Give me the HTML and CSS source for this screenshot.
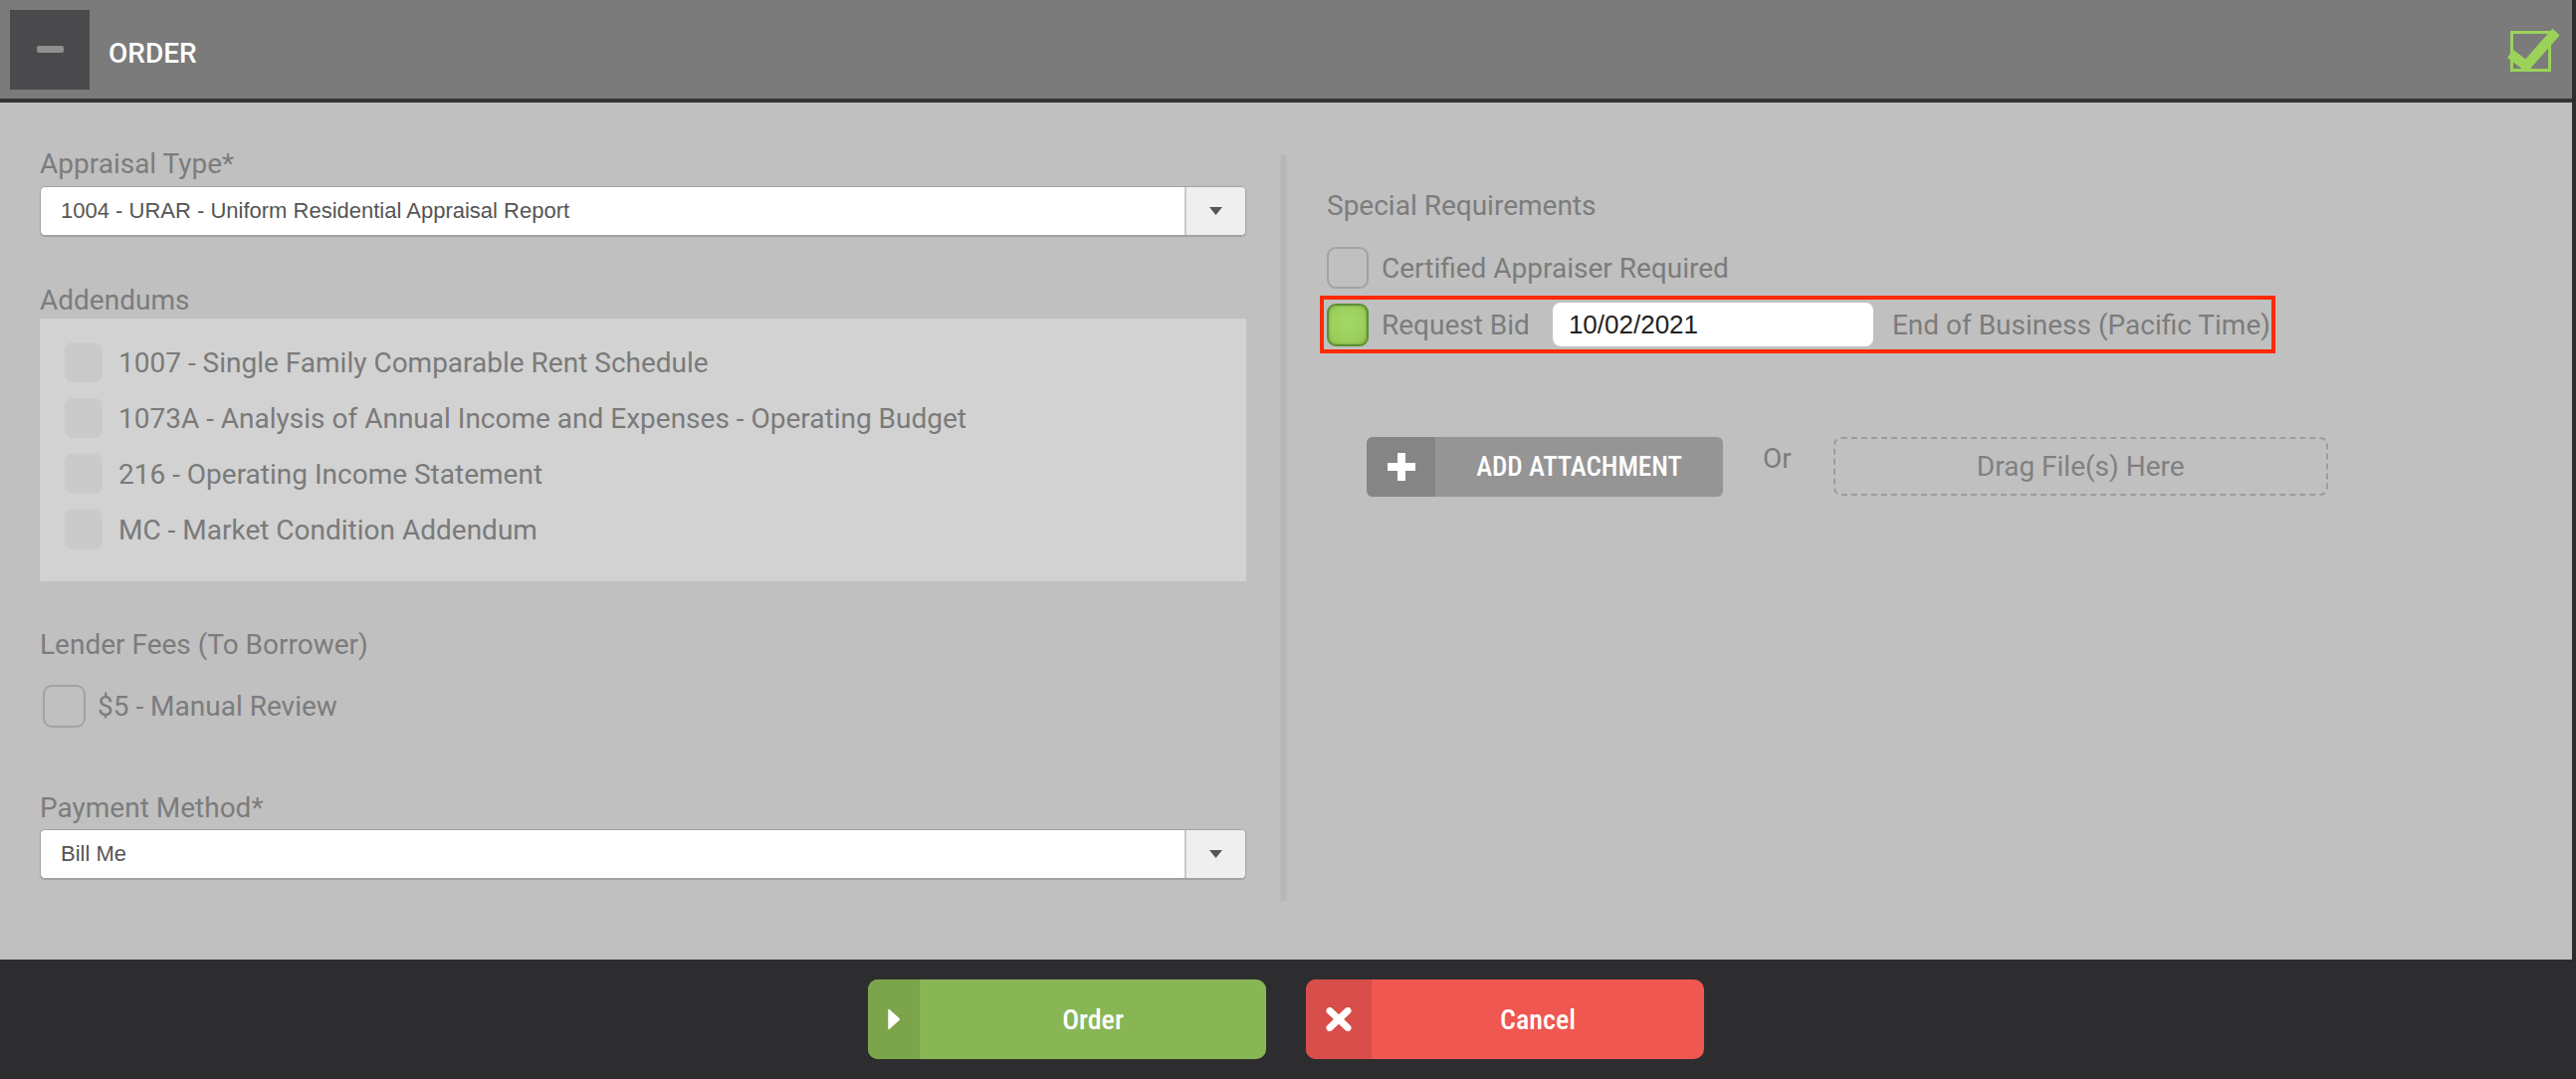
FILE: index.html
```html
<!DOCTYPE html>
<html lang="en">
<head>
<meta charset="utf-8">
<title>Order</title>
<link rel="stylesheet" href="styles.css">
</head>
<body>
<div class="page">
  <header class="topbar">
    <div class="collapse"><span class="minus"></span></div>
    <div class="title">ORDER</div>
    <svg class="done" width="52" height="44" viewBox="0 0 52 44" aria-hidden="true">
      <rect x="4.5" y="4.5" width="38" height="38" fill="none" stroke="#9bd35a" stroke-width="3"/>
      <path d="M3 26 L19 38 L49 4" fill="none" stroke="#9bd35a" stroke-width="10"/>
    </svg>
  </header>

  <main class="content">
    <section class="col-left">
      <div class="field">
        <div class="label">Appraisal Type*</div>
        <div class="select">
          <span class="select-value">1004 - URAR - Uniform Residential Appraisal Report</span>
          <span class="select-arrow"><svg width="13" height="8" viewBox="0 0 13 8"><path d="M0 0 H13 L6.5 8 Z" fill="#555"/></svg></span>
        </div>
      </div>

      <div class="field field-addenda">
        <div class="label">Addendums</div>
        <div class="addenda">
          <div class="addendum"><span class="box-disabled"></span><span class="addendum-text">1007 - Single Family Comparable Rent Schedule</span></div>
          <div class="addendum"><span class="box-disabled"></span><span class="addendum-text">1073A - Analysis of Annual Income and Expenses - Operating Budget</span></div>
          <div class="addendum"><span class="box-disabled"></span><span class="addendum-text">216 - Operating Income Statement</span></div>
          <div class="addendum"><span class="box-disabled"></span><span class="addendum-text">MC - Market Condition Addendum</span></div>
        </div>
      </div>

      <div class="field field-fees">
        <div class="label">Lender Fees (To Borrower)</div>
        <div class="fee-row"><span class="check check-lg"></span><span class="option-text fee-text">$5 - Manual Review</span></div>
      </div>

      <div class="field field-payment">
        <div class="label">Payment Method*</div>
        <div class="select">
          <span class="select-value">Bill Me</span>
          <span class="select-arrow"><svg width="13" height="8" viewBox="0 0 13 8"><path d="M0 0 H13 L6.5 8 Z" fill="#555"/></svg></span>
        </div>
      </div>
    </section>

    <div class="divider"></div>

    <section class="col-right">
      <div class="label">Special Requirements</div>
      <div class="req-row"><span class="check"></span><span class="option-text">Certified Appraiser Required</span></div>
      <div class="bid">
        <span class="check-on"></span>
        <span class="option-text">Request Bid</span>
        <span class="date">10/02/2021</span>
        <span class="option-text bid-note">End of Business (Pacific Time)</span>
      </div>

      <div class="attach-row">
        <div class="attach-btn">
          <span class="attach-icon"><svg width="28" height="28" viewBox="0 0 28 28"><rect x="10" y="0" width="8" height="28" fill="#fff"/><rect x="0" y="10" width="28" height="8" fill="#fff"/></svg></span>
          <span class="attach-text">ADD ATTACHMENT</span>
        </div>
        <span class="or">Or</span>
        <div class="drop">Drag File(s) Here</div>
      </div>
    </section>
  </main>

  <footer class="actions">
    <div class="btn btn-order">
      <span class="btn-icon"><svg width="12" height="22" viewBox="0 0 12 22"><path d="M1 1.5 L11.5 11 L1 20.5 Z" fill="#fff" stroke="#fff" stroke-width="1.5" stroke-linejoin="round"/></svg></span>
      <span class="btn-text">Order</span>
    </div>
    <div class="btn btn-cancel">
      <span class="btn-icon"><svg width="26" height="24" viewBox="0 0 26 24"><path d="M4 3.5 L22 20.5 M22 3.5 L4 20.5" stroke="#fff" stroke-width="7" stroke-linecap="round"/></svg></span>
      <span class="btn-text">Cancel</span>
    </div>
  </footer>
</div>
</body>
</html>
```

FILE: styles.css
```css
* { box-sizing: border-box; }

html, body {
  margin: 0;
  padding: 0;
}

body {
  width: 2588px;
  height: 1084px;
  overflow: hidden;
  background: #2d2d2f;
  font-family: Roboto, "Liberation Sans", Arial, sans-serif;
}

.page {
  width: 2584px;
  height: 1084px;
  display: flex;
  flex-direction: column;
}

/* Header */
.topbar {
  height: 103px;
  flex: none;
  background: #7b7b7b;
  border-bottom: 4px solid #333335;
  display: flex;
  align-items: center;
  padding: 0 13px 0 10px;
}

.collapse {
  width: 80px;
  height: 80px;
  background: #4a4a4c;
  display: flex;
  align-items: center;
  justify-content: center;
}

.minus {
  width: 27px;
  height: 7px;
  border-radius: 2px;
  background: #8f8f8f;
}

.title {
  margin-left: 19px;
  margin-top: 8px;
  color: #fff;
  font-size: 28px;
  font-weight: 500;
}

.done {
  margin-left: auto;
  display: block;
}

/* Content */
.content {
  height: 861px;
  flex: none;
  background: #c0c0c0;
  display: flex;
}

.col-left {
  width: 1212px;
  margin-left: 40px;
  padding-top: 45px;
}

.label {
  font-size: 28px;
  line-height: 34px;
  color: #7c7c7c;
}

.select {
  margin-top: 5px;
  height: 50px;
  background: #fff;
  border: 1px solid #a3a3a3;
  border-radius: 5px;
  display: flex;
  overflow: hidden;
  box-shadow: 0 1px 1px rgba(0, 0, 0, 0.18);
}

.select-value {
  flex: 1;
  padding-left: 20px;
  display: flex;
  align-items: center;
  font-family: "Liberation Sans", Arial, sans-serif;
  font-size: 22px;
  color: #555;
}

.select-arrow {
  width: 61px;
  background: #efefef;
  border-left: 2px solid #c9c9c9;
  display: flex;
  align-items: center;
  justify-content: center;
}

.field-addenda { margin-top: 48px; }
.field-fees { margin-top: 47px; }
.field-payment { margin-top: 64px; }
.field-payment .select { margin-top: 4px; }

.addenda {
  margin-top: 1px;
  height: 264px;
  background: #d2d2d2;
  padding: 24px 25px;
  display: flex;
  flex-direction: column;
  gap: 16px;
}

.addendum {
  display: flex;
  align-items: center;
  height: 40px;
}

.box-disabled {
  width: 38px;
  height: 40px;
  border-radius: 8px;
  background: #cacaca;
  flex: none;
}

.addendum-text {
  margin-left: 16px;
  font-size: 28px;
  color: #7a7a7a;
}

.fee-row {
  margin-top: 23px;
  margin-left: 3px;
  display: flex;
  align-items: center;
}

.check {
  width: 42px;
  height: 42px;
  border: 2px solid #a2a2a2;
  border-radius: 9px;
  flex: none;
}

.check-lg {
  width: 43px;
  height: 43px;
}

.option-text {
  margin-left: 13px;
  font-size: 28px;
  color: #7c7c7c;
  white-space: nowrap;
}

.fee-text { margin-left: 12px; }

/* Divider */
.divider {
  margin-left: 33px;
  margin-top: 52px;
  width: 8px;
  height: 750px;
  background: linear-gradient(to right, #bebebe, #b5b5b5 55%, #bbbbbb);
}

/* Right column */
.col-right {
  margin-left: 40px;
  padding-top: 87px;
}

.req-row {
  margin-top: 24px;
  display: flex;
  align-items: center;
}

.bid {
  margin-top: 7px;
  margin-left: -7px;
  width: fit-content;
  display: flex;
  align-items: center;
  border: 4px solid #ff2a00;
  padding: 3px 1px 3px 3px;
}

.check-on {
  width: 42px;
  height: 43px;
  border-radius: 9px;
  border: 2px solid #5f8e36;
  background: radial-gradient(circle at 50% 45%, #a3d866 0%, #9bd05d 60%, #8cc150 100%);
  box-shadow: inset 0 0 3px rgba(40, 70, 10, 0.35);
  flex: none;
}

.date {
  margin-left: 23px;
  width: 322px;
  height: 44px;
  background: #fff;
  border-radius: 8px;
  padding-left: 16px;
  display: flex;
  align-items: center;
  font-family: "Liberation Sans", Arial, sans-serif;
  font-size: 26px;
  color: #222;
}

.bid-note { margin-left: 19px; }

.attach-row {
  margin-top: 84px;
  margin-left: 40px;
  display: flex;
  align-items: flex-start;
}

.attach-btn {
  width: 358px;
  height: 60px;
  border-radius: 6px;
  overflow: hidden;
  display: flex;
  background: #959595;
}

.attach-icon {
  width: 69px;
  background: #858585;
  display: flex;
  align-items: center;
  justify-content: center;
}

.attach-text {
  flex: 1;
  display: flex;
  align-items: center;
  justify-content: center;
  color: #fff;
  font-family: "Roboto Condensed", "Liberation Sans Narrow", Roboto, sans-serif;
  font-size: 27px;
  font-weight: 500;
}

.or {
  margin-left: 40px;
  margin-top: 5px;
  font-size: 28px;
  line-height: 34px;
  color: #7c7c7c;
}

.drop {
  margin-left: 42px;
  width: 497px;
  height: 59px;
  border: 2px dashed #9c9c9c;
  border-radius: 8px;
  display: flex;
  align-items: center;
  justify-content: center;
  font-size: 28px;
  color: #808080;
}

/* Footer */
.actions {
  height: 120px;
  flex: none;
  background: #2d2d2f;
  display: flex;
  justify-content: center;
  gap: 40px;
  padding-top: 20px;
}

.btn {
  width: 400px;
  height: 80px;
  border-radius: 10px;
  overflow: hidden;
  display: flex;
  color: #fff;
}

.btn-icon {
  display: flex;
  align-items: center;
  justify-content: center;
}

.btn-order { background: #89b654; }
.btn-order .btn-icon { width: 52px; background: #7ca44a; }

.btn-cancel { background: #ef5750; }
.btn-cancel .btn-icon { width: 66px; background: #d84e4a; }

.btn-text {
  flex: 1;
  display: flex;
  align-items: center;
  justify-content: center;
  font-family: "Roboto Condensed", "Liberation Sans Narrow", Roboto, sans-serif;
  font-size: 28px;
  font-weight: 500;
}
```
